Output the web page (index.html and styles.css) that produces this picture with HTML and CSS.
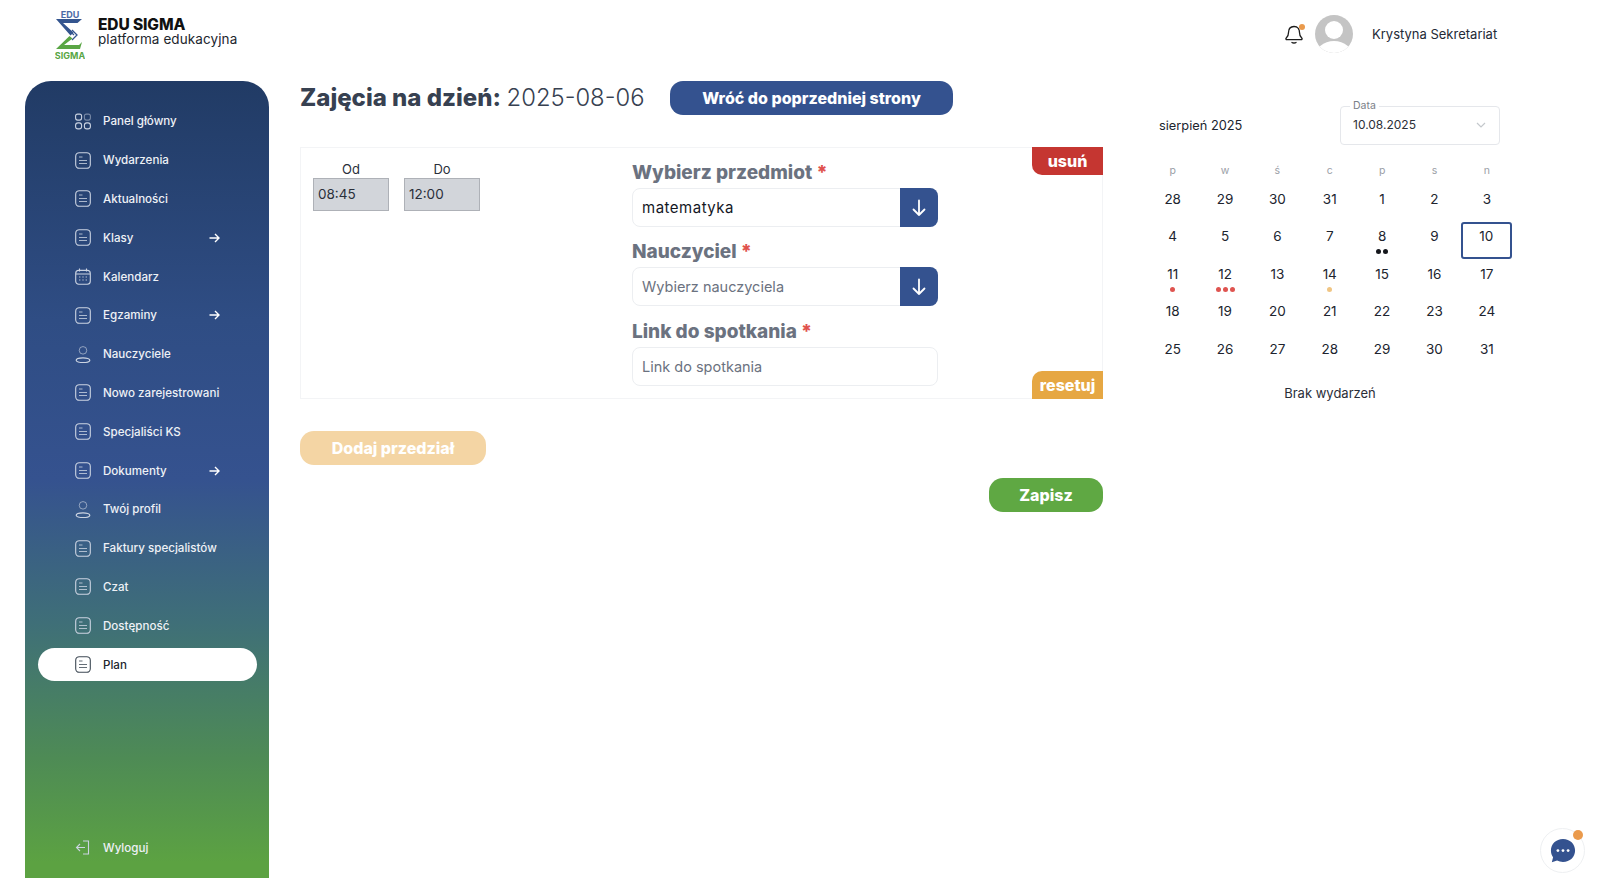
FILE: index.html
```html
<!DOCTYPE html>
<html lang="pl">
<head>
<meta charset="utf-8">
<title>EDU SIGMA</title>
<link rel="stylesheet" href="styles.css">
</head>
<body>
<svg class="defs" width="0" height="0" aria-hidden="true">
  <symbol id="i-doc" viewBox="0 0 16 17"><rect x="0.7" y="0.7" width="14.6" height="15.6" rx="3.6" fill="none" stroke="currentColor" stroke-width="1.1"/><path d="M4 5h3.5M4 8.5h8M4 11.5h8" fill="none" stroke="currentColor" stroke-width="1" opacity=".8"/></symbol>
  <symbol id="i-grid" viewBox="0 0 16 16"><rect x="0.6" y="0.6" width="6" height="6" rx="2" fill="none" stroke="currentColor" stroke-width="1.1"/><rect x="9.4" y="0.6" width="6" height="6" rx="2" fill="none" stroke="currentColor" stroke-width="1.1" opacity=".5"/><rect x="0.6" y="9.4" width="6" height="6" rx="2.4" fill="none" stroke="currentColor" stroke-width="1.1"/><rect x="9.4" y="9.4" width="6" height="6" rx="2.4" fill="none" stroke="currentColor" stroke-width="1.1"/></symbol>
  <symbol id="i-cal" viewBox="0 0 16 17"><rect x="0.7" y="2.4" width="14.6" height="13.9" rx="3" fill="none" stroke="currentColor" stroke-width="1.1"/><path d="M1 6h14M4.5 .6v3M11.5 .6v3" fill="none" stroke="currentColor" stroke-width="1.1"/><path d="M4 9h1.4M7.3 9h1.4M10.6 9h1.4M4 12h1.4M7.3 12h1.4M10.6 12h1.4" fill="none" stroke="currentColor" stroke-width="1.1" opacity=".85"/></symbol>
  <symbol id="i-user" viewBox="0 0 16 18"><circle cx="8" cy="4.600" r="4" fill="none" stroke="currentColor" stroke-width="1" opacity=".65"/><ellipse cx="8" cy="15" rx="7.200" ry="2.500" fill="none" stroke="currentColor" stroke-width="1.300"/></symbol>
  <symbol id="i-arrow" viewBox="0 0 11 10"><path d="M.5 5h9.400M6 1l4 4-4 4" fill="none" stroke="currentColor" stroke-width="1.400"/></symbol>
  <symbol id="i-down" viewBox="0 0 14 18"><path d="M7 1.500v14.500M1.500 10.500 7 16l5.500-5.500" fill="none" stroke="currentColor" stroke-width="1.800" stroke-linecap="round" stroke-linejoin="round"/></symbol>
</svg>

<header class="topbar">
  <div class="brand">
    <svg class="logo" viewBox="0 0 30 50" width="30" height="50">
      <text x="15" y="7.500" class="logo-edu" text-anchor="middle">EDU</text>
      <path d="M1 9H27L22.500 13H8L18.500 22.500 15.500 25.500z" fill="#34558f"/>
      <path d="M17 20l5 5-5 5M14.500 20.500l4.500 4.500" fill="none" stroke="#34558f" stroke-width="1.300"/>
      <path d="M14.500 26 17.500 28.500 9 35H24L27 32 25 39H1z" fill="#5aa645"/>
      <text x="15" y="48.500" class="logo-sigma" text-anchor="middle">SIGMA</text>
    </svg>
    <div class="brand-text">
      <div class="brand-name">EDU SIGMA</div>
      <div class="brand-sub">platforma edukacyjna</div>
    </div>
  </div>
  <div class="account">
    <span class="bell">
      <svg viewBox="0 0 18 20" width="18" height="20"><path d="M9 2.500C5 2.500 3.500 5.500 3.500 8.500c0 3-1 4.500-2.200 5.500-.8.800-.2 1.700.6 1.700h14.200c.8 0 1.400-.9.600-1.700C15.500 13 14.500 11.500 14.500 8.500 14.500 5.500 13 2.500 9 2.500z" fill="none" stroke="#1c1c1c" stroke-width="1.300"/><path d="M6.500 18.200c1.500 1 3.500 1 5 0" fill="none" stroke="#1c1c1c" stroke-width="1.300"/></svg>
      <i class="bell-dot"></i>
    </span>
    <svg class="avatar" viewBox="0 0 38 38" width="38" height="38"><defs><clipPath id="av"><circle cx="19" cy="19" r="19"/></clipPath></defs><circle cx="19" cy="19" r="19" fill="#c4c4c4"/><g clip-path="url(#av)"><circle cx="19" cy="15" r="9" fill="#fff"/><ellipse cx="19" cy="42" rx="19" ry="16" fill="#fff"/></g></svg>
    <span class="user-name">Krystyna Sekretariat</span>
  </div>
</header>

<div class="shell">
  <nav class="sidebar">
    <a class="nav-item"><svg class="nav-icon"><use href="#i-grid"/></svg><span class="nav-label">Panel główny</span></a>
    <a class="nav-item"><svg class="nav-icon"><use href="#i-doc"/></svg><span class="nav-label">Wydarzenia</span></a>
    <a class="nav-item"><svg class="nav-icon"><use href="#i-doc"/></svg><span class="nav-label">Aktualności</span></a>
    <a class="nav-item"><svg class="nav-icon"><use href="#i-doc"/></svg><span class="nav-label">Klasy</span><svg class="nav-arrow"><use href="#i-arrow"/></svg></a>
    <a class="nav-item"><svg class="nav-icon"><use href="#i-cal"/></svg><span class="nav-label">Kalendarz</span></a>
    <a class="nav-item"><svg class="nav-icon"><use href="#i-doc"/></svg><span class="nav-label">Egzaminy</span><svg class="nav-arrow"><use href="#i-arrow"/></svg></a>
    <a class="nav-item"><svg class="nav-icon"><use href="#i-user"/></svg><span class="nav-label">Nauczyciele</span></a>
    <a class="nav-item"><svg class="nav-icon"><use href="#i-doc"/></svg><span class="nav-label">Nowo zarejestrowani</span></a>
    <a class="nav-item"><svg class="nav-icon"><use href="#i-doc"/></svg><span class="nav-label">Specjaliści KS</span></a>
    <a class="nav-item"><svg class="nav-icon"><use href="#i-doc"/></svg><span class="nav-label">Dokumenty</span><svg class="nav-arrow"><use href="#i-arrow"/></svg></a>
    <a class="nav-item"><svg class="nav-icon"><use href="#i-user"/></svg><span class="nav-label">Twój profil</span></a>
    <a class="nav-item"><svg class="nav-icon"><use href="#i-doc"/></svg><span class="nav-label">Faktury specjalistów</span></a>
    <a class="nav-item"><svg class="nav-icon"><use href="#i-doc"/></svg><span class="nav-label">Czat</span></a>
    <a class="nav-item"><svg class="nav-icon"><use href="#i-doc"/></svg><span class="nav-label">Dostępność</span></a>
    <a class="nav-item active"><svg class="nav-icon"><use href="#i-doc"/></svg><span class="nav-label">Plan</span></a>
    <a class="nav-item logout"><svg class="nav-icon" viewBox="0 0 16 16"><path d="M8 1.500h5.500v13H8M10 8H1.500M5 4.500 1.500 8 5 11.500" fill="none" stroke="currentColor" stroke-width="1.100"/></svg><span class="nav-label">Wyloguj</span></a>
  </nav>

  <main class="main">
    <div class="title-row">
      <h1 class="title"><b>Zajęcia na dzień:</b> <span>2025-08-06</span></h1>
      <button class="btn btn-back">Wróć do poprzedniej strony</button>
    </div>

    <section class="panel">
      <button class="tag tag-del">usuń</button>
      <button class="tag tag-reset">resetuj</button>
      <div class="times">
        <div class="time"><div class="time-label">Od</div><div class="time-box">08:45</div></div>
        <div class="time"><div class="time-label">Do</div><div class="time-box">12:00</div></div>
      </div>
      <div class="fields">
        <div class="field-label">Wybierz przedmiot <em>*</em></div>
        <div class="select"><span class="value">matematyka</span><span class="select-btn"><svg width="14" height="18"><use href="#i-down"/></svg></span></div>
        <div class="field-label">Nauczyciel <em>*</em></div>
        <div class="select"><span class="placeholder">Wybierz nauczyciela</span><span class="select-btn"><svg width="14" height="18"><use href="#i-down"/></svg></span></div>
        <div class="field-label">Link do spotkania <em>*</em></div>
        <div class="select"><span class="placeholder">Link do spotkania</span></div>
      </div>
    </section>

    <button class="btn btn-add">Dodaj przedział</button>
    <div class="save-row"><button class="btn btn-save">Zapisz</button></div>
  </main>

  <aside class="calendar">
    <div class="cal-head">
      <span class="cal-month">sierpień 2025</span>
      <fieldset class="date-field">
        <legend>Data</legend>
        <span>10.08.2025</span>
        <svg width="10" height="6" viewBox="0 0 10 6"><path d="M1 1l4 4 4-4" fill="none" stroke="#c4c8cc" stroke-width="1.200"/></svg>
      </fieldset>
    </div>
    <div class="cal-grid">
      <div class="wd">p</div><div class="wd">w</div><div class="wd">ś</div><div class="wd">c</div><div class="wd">p</div><div class="wd">s</div><div class="wd">n</div>
      <div class="day">28</div><div class="day">29</div><div class="day">30</div><div class="day">31</div><div class="day">1</div><div class="day">2</div><div class="day">3</div>
      <div class="day">4</div><div class="day">5</div><div class="day">6</div><div class="day">7</div><div class="day">8<span class="dots"><i class="dot dark"></i><i class="dot dark"></i></span></div><div class="day">9</div><div class="day selected">10</div>
      <div class="day">11<span class="dots"><i class="dot red"></i></span></div><div class="day">12<span class="dots"><i class="dot red"></i><i class="dot red"></i><i class="dot red"></i></span></div><div class="day">13</div><div class="day">14<span class="dots"><i class="dot amber"></i></span></div><div class="day">15</div><div class="day">16</div><div class="day">17</div>
      <div class="day">18</div><div class="day">19</div><div class="day">20</div><div class="day">21</div><div class="day">22</div><div class="day">23</div><div class="day">24</div>
      <div class="day">25</div><div class="day">26</div><div class="day">27</div><div class="day">28</div><div class="day">29</div><div class="day">30</div><div class="day">31</div>
    </div>
    <p class="no-events">Brak wydarzeń</p>
  </aside>
</div>

<div class="chat">
  <svg viewBox="0 0 28 28" width="26" height="26"><path d="M14 1C6.500 1 1 6.500 1 13.500c0 2.800.9 5.300 2.300 7.300L2 26l5.600-1.700c1.900 1 4.100 1.500 6.400 1.500 7.500 0 13-5.300 13-12.300S21.500 1 14 1z" fill="#34528f"/><circle cx="8.500" cy="13.500" r="1.500" fill="#fff"/><circle cx="14" cy="13.500" r="1.500" fill="#fff"/><circle cx="19.500" cy="13.500" r="1.500" fill="#fff"/></svg>
  <i class="chat-dot"></i>
</div>
</body>
</html>
```

FILE: styles.css
```css
* { box-sizing: border-box; }
html, body { margin: 0; height: 100%; }
body {
  width: 1600px;
  height: 878px;
  overflow: hidden;
  background: #fff;
  font-family: "Inter", "Noto Sans", sans-serif;
  color: #1f2330;
}
.defs { position: absolute; }

/* top bar */
.topbar {
  height: 81px;
  display: flex;
  justify-content: space-between;
  padding: 10px 100px 0 55px;
}
.brand { display: flex; gap: 13px; height: 50px; }
.logo-edu { font: 700 9px "Inter", sans-serif; fill: #4b69a5; }
.logo-sigma { font: 700 9px "Inter", sans-serif; fill: #5aa645; }
.brand-text { padding-top: 7px; }
.brand-name { font-size: 15.500px; font-weight: 800; line-height: 16px; color: #111; letter-spacing: -.1px; }
.brand-sub { font-size: 13.500px; line-height: 13px; color: #22262e; letter-spacing: .1px; }
.account { display: flex; align-items: center; height: 48px; }
.bell { position: relative; width: 18px; height: 20px; margin-left: 1px; margin-right: 12px; }
.bell-dot { position: absolute; right: -2px; top: 0; width: 6px; height: 6px; border-radius: 50%; background: #ea9a4c; }
.avatar { margin-right: 19px; }
.user-name { font-size: 13px; color: #242a36; width: 128px; white-space: nowrap; }

/* layout */
.shell { display: flex; height: 797px; padding-left: 25px; }

/* sidebar */
.sidebar {
  width: 244px;
  height: 100%;
  flex: none;
  display: flex;
  flex-direction: column;
  padding: 21px 12px 11px 13px;
  border-radius: 26px 26px 0 0;
  background: linear-gradient(180deg, #213b65 0%, #2f4d84 30%, #35528f 50%, #3f6f78 68%, #4e8b55 85%, #5ca242 98%);
}
.nav-item {
  height: 38.800px;
  flex: none;
  display: flex;
  align-items: center;
  padding-left: 37px;
  font-size: 11.600px;
  font-weight: 500;
  color: #eef1f6;
  position: relative;
}
.nav-icon { width: 16px; height: 17px; flex: none; color: #ccd4e2; margin-right: 12px; }
.nav-label { width: 106px; white-space: nowrap; }
.nav-arrow { width: 11px; height: 10px; color: #fff; }
.nav-item.active { color: #22262e; z-index: 0; }
.nav-item.active::before {
  content: "";
  position: absolute;
  left: 0; right: 0; top: 3px; bottom: 3px;
  background: #fff;
  border-radius: 17px;
  z-index: -1;
}
.nav-item.active .nav-icon { color: #3f4a55; }
.logout { margin-top: auto; }

/* main */
.main { width: 803px; flex: none; margin-left: 31px; }
.title-row { display: flex; align-items: center; height: 34px; gap: 25px; }
.title { width: 345px; margin: 0 0 2px; font-size: 24px; font-weight: 400; color: #374151; white-space: nowrap; }
.title b { font-weight: 800; }
.title span { font-weight: 300; font-size: 23.800px; margin-left: -1px; }
.btn {
  border: 0;
  height: 34px;
  font: 800 16px "Inter", sans-serif;
  color: #fff;
  border-radius: 13px;
  padding: 0;
}
.btn-back { width: 283px; background: #34528f; }
.panel {
  position: relative;
  margin-top: 32px;
  height: 252px;
  border: 1px solid #f3f4f6;
  display: flex;
  padding: 11px 0 0 12px;
}
.tag {
  position: absolute;
  right: -1px;
  width: 71px;
  height: 28px;
  border: 0;
  padding: 0;
  font: 800 16px "Inter", sans-serif;
  color: #fff;
}
.tag-del { top: -1px; background: #c53631; border-radius: 0 0 0 10px; }
.tag-reset { bottom: -1px; background: #e6a743; border-radius: 10px 0 0 0; }
.times { display: flex; gap: 15px; width: 319px; }
.time { width: 76px; }
.time-label { font-size: 13px; line-height: 20px; text-align: center; color: #2a2f3a; height: 19px; }
.time-box {
  height: 33px;
  background: #d2d5da;
  border: 1px solid #aeb1b7;
  font-size: 13.500px;
  line-height: 30px;
  padding-left: 4px;
  color: #2a2f3a;
}
.fields { width: 305.500px; }
.field-label {
  font-size: 19px;
  font-weight: 800;
  line-height: 24px;
  height: 29px;
  color: #6b7280;
  white-space: nowrap;
  padding-top: 2px;
}
.field-label em { font-style: normal; color: #e0524d; }
.select {
  height: 39px;
  display: flex;
  align-items: center;
  justify-content: space-between;
  border: 1px solid #eceef1;
  border-radius: 8px;
  padding-left: 9px;
  font-size: 14.500px;
  margin-bottom: 11.400px;
}
.select:last-child { margin-bottom: 0; }
.value { color: #14171f; font-size: 15px; letter-spacing: .5px; }
.placeholder { color: #6b7280; }
.select-btn {
  width: 38px;
  height: 39px;
  margin: 0 -1px 0 0;
  display: flex;
  align-items: center;
  justify-content: center;
  background: #34528f;
  border-radius: 0 8px 8px 0;
  color: #fff;
}
.btn-add { display: block; margin-top: 32px; width: 186px; background: #f4d5a4; border-radius: 14px; }
.save-row { display: flex; justify-content: flex-end; margin-top: 13px; }
.btn-save { width: 114px; background: #5fa843; border-radius: 14px; }

/* calendar */
.calendar { width: 366px; flex: none; margin-left: 44px; padding-top: 18px; }
.cal-head { display: flex; align-items: flex-end; justify-content: space-between; padding: 0 13px 0 12px; height: 46px; }
.cal-month { font-size: 12.800px; color: #20242e; line-height: 38px; }
.date-field {
  width: 160px;
  height: 44px;
  margin: 0;
  padding: 0 13px 6px 12px;
  border: 1px solid #e5e7eb;
  border-radius: 4px;
  display: flex;
  align-items: center;
  justify-content: space-between;
  font-size: 12px;
  color: #2c3038;
}
.date-field legend { font-size: 10.500px; padding: 0 3px; margin-left: -3px; color: #7b8088; line-height: 10px; }
.cal-grid {
  display: grid;
  grid-template-columns: repeat(7, 1fr);
  grid-template-rows: 21px repeat(5, 37.400px);
  margin: 16px 0 0 -.5px;
}
.wd { text-align: center; font-size: 10.500px; line-height: 20px; color: #9a9ea6; }
.day {
  position: relative;
  text-align: center;
  font-size: 13.500px;
  line-height: 30px;
  color: #20242e;
  margin-top: 2px;
}
.day.selected {
  margin: 3px 1px -2px 0;
  border: 2px solid #34528f;
  border-radius: 3px;
  line-height: 24px;
}
.dots {
  position: absolute;
  left: 0; right: 0; top: 28px;
  display: flex;
  justify-content: center;
  gap: 2px;
}
.dot { width: 5px; height: 5px; border-radius: 50%; }
.dark { background: #15171c; }
.red { background: #df5450; }
.amber { background: #f0c583; }
.no-events { margin: 16px 0 0; text-align: center; font-size: 13px; color: #2a2e38; }

/* chat */
.chat {
  position: absolute;
  left: 1540px;
  top: 828px;
  width: 45px;
  height: 45px;
  border-radius: 50%;
  border: 1px solid #eef0f2;
  background: #fff;
  display: flex;
  align-items: center;
  justify-content: center;
}
.chat-dot { position: absolute; right: 1px; top: 1px; width: 10px; height: 10px; border-radius: 50%; background: #ea9a4c; }
```
